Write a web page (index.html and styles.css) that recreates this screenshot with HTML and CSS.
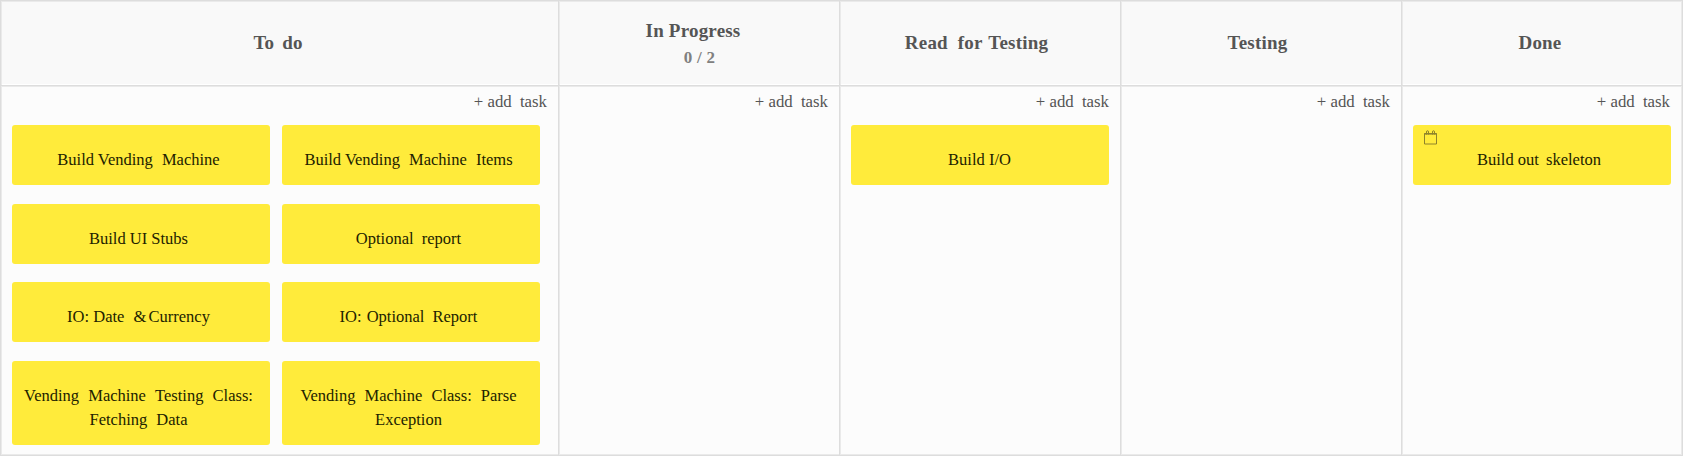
FILE: index.html
```
<!DOCTYPE html>
<html lang="en">
<head>
<meta charset="utf-8">
<title>Task board</title>
<link rel="stylesheet" href="styles.css">
</head>
<body>
<main class="board">
  <section class="column wide-column">
    <header class="head"><h2 class="trail-s">To <span class="g3">do</span></h2></header>
    <div class="body">
      <a class="add">+ add <span class="g4">task</span></a>
      <div class="cards">
        <article class="card">Build Vending <span class="g5">Machine</span></article>
        <article class="card">Build Vending <span class="g5">Machine</span> <span class="g5">Items</span></article>
        <article class="card">Build UI Stubs</article>
        <article class="card">Optional <span class="g4">report</span></article>
        <article class="card">IO: Date <span class="g5">&amp;</span> <span class="tight">Currency</span></article>
        <article class="card">IO: <span class="g1">Optional</span> <span class="g4">Report</span></article>
        <article class="card">Vending <span class="g5">Machine</span> <span class="g5">Testing</span> <span class="g5">Class:</span><br>Fetching <span class="g5">Data</span></article>
        <article class="card">Vending <span class="g5">Machine</span> <span class="g5">Class:</span> <span class="g5">Parse</span><br>Exception</article>
      </div>
    </div>
  </section>
  <section class="column">
    <header class="head limited"><h2 class="trail-l">In Progress</h2><p class="limit">0 / 2</p></header>
    <div class="body"><a class="add">+ add <span class="g4">task</span></a></div>
  </section>
  <section class="column">
    <header class="head"><h2 class="trail-m">Read <span class="g5">for</span> <span class="g1">Testing</span></h2></header>
    <div class="body">
      <a class="add">+ add <span class="g4">task</span></a>
      <div class="cards"><article class="card even">Build I/O</article></div>
    </div>
  </section>
  <section class="column">
    <header class="head"><h2 class="trail-m">Testing</h2></header>
    <div class="body"><a class="add">+ add <span class="g4">task</span></a></div>
  </section>
  <section class="column last">
    <header class="head"><h2 class="trail-s">Done</h2></header>
    <div class="body">
      <a class="add">+ add <span class="g4">task</span></a>
      <div class="cards">
        <article class="card shifted">
          <svg class="calendar" width="14" height="15" viewBox="0 0 14 15" fill="none" stroke="currentColor"><path d="M.5 3.500h12v10.500H.5z"/><path d="M.5 3.800h12" stroke-width="1.600"/><path d="M2.500 4.500V2q0-1.300 1-1.300t1 1.300v2.500M8.500 4.500V2q0-1.300 1-1.300t1 1.300v2.500"/></svg>
          Build out <span class="g3">skeleton</span>
        </article>
      </div>
    </div>
  </section>
</main>
</body>
</html>
```
FILE: styles.css
```
* { box-sizing: border-box; }
body { margin: 0; background: #fcfcfc; font-family: "Liberation Serif", "Times New Roman", serif; }
.board {
  display: grid;
  grid-template-columns: 558px 281px 281px 281px 282px;
  width: 1683px;
  height: 456px;
  border-top: 1px solid #ddd;
  border-bottom: 1px solid #ddd;
  overflow: hidden;
}
.column {
  display: flex;
  flex-direction: column;
  border-left: 1px solid #ddd;
  box-shadow: inset 1px 0 #eaeaea, inset 0 1px #eaeaea, inset 0 -1px #eaeaea;
}
.last {
  border-right: 1px solid #ddd;
  box-shadow: inset 1px 0 #eaeaea, inset -1px 0 #eaeaea, inset 0 1px #eaeaea, inset 0 -1px #eaeaea;
}
.head {
  margin: 1px 0 0 1px;
  height: 83px;
  padding-bottom: 2px;
  background: #f9f9f9;
  border-bottom: 1px solid #fff;
  display: flex;
  flex-direction: column;
  align-items: center;
  justify-content: center;
  color: #555;
}
.limited { padding: 2px 0 0; }
.last .head { margin-right: 1px; }
h2 { margin: 0; font-size: 19px; line-height: 27px; letter-spacing: .2px; font-weight: bold; }
.trail-s { padding-right: 4px; }
.trail-m { padding-right: 8px; }
.trail-l { padding-right: 13px; }
.limit { margin: 0; font-size: 17px; line-height: 27px; font-weight: bold; letter-spacing: .3px; color: #808080; }
.body {
  flex: 1;
  margin-left: -1px;
  border-top: 1px solid #ddd;
  box-shadow: inset 0 1px #eaeaea, inset 1px 0 #eaeaea;
  border-left: 1px solid #ddd;
  padding: 5px 11px 0;
}
.add { display: block; text-align: right; font-size: 16.800px; line-height: 22px; color: #555; }
.last .add { padding-right: 1px; }
.cards { display: grid; grid-template-columns: 258px; margin-top: 12px; }
.wide-column .cards { grid-template-columns: 258px 258px; column-gap: 12px; row-gap: 18.600px; }
.card {
  position: relative;
  padding: 23px 5px 13px 0;
  background: #ffeb3b;
  border-radius: 3px;
  color: #222200;
  font-size: 16.500px;
  line-height: 24px;
  text-align: center;
  white-space: nowrap;
}
.even { padding-right: 1px; }
.shifted { padding-right: 6px; }
.calendar { position: absolute; left: 11px; top: 5px; color: #8e832b; }
.g1 { margin-left: 1px; }
.g3 { margin-left: 3px; }
.g4 { margin-left: 4px; }
.g5 { margin-left: 5px; }
.tight { margin-left: -2px; }
```
